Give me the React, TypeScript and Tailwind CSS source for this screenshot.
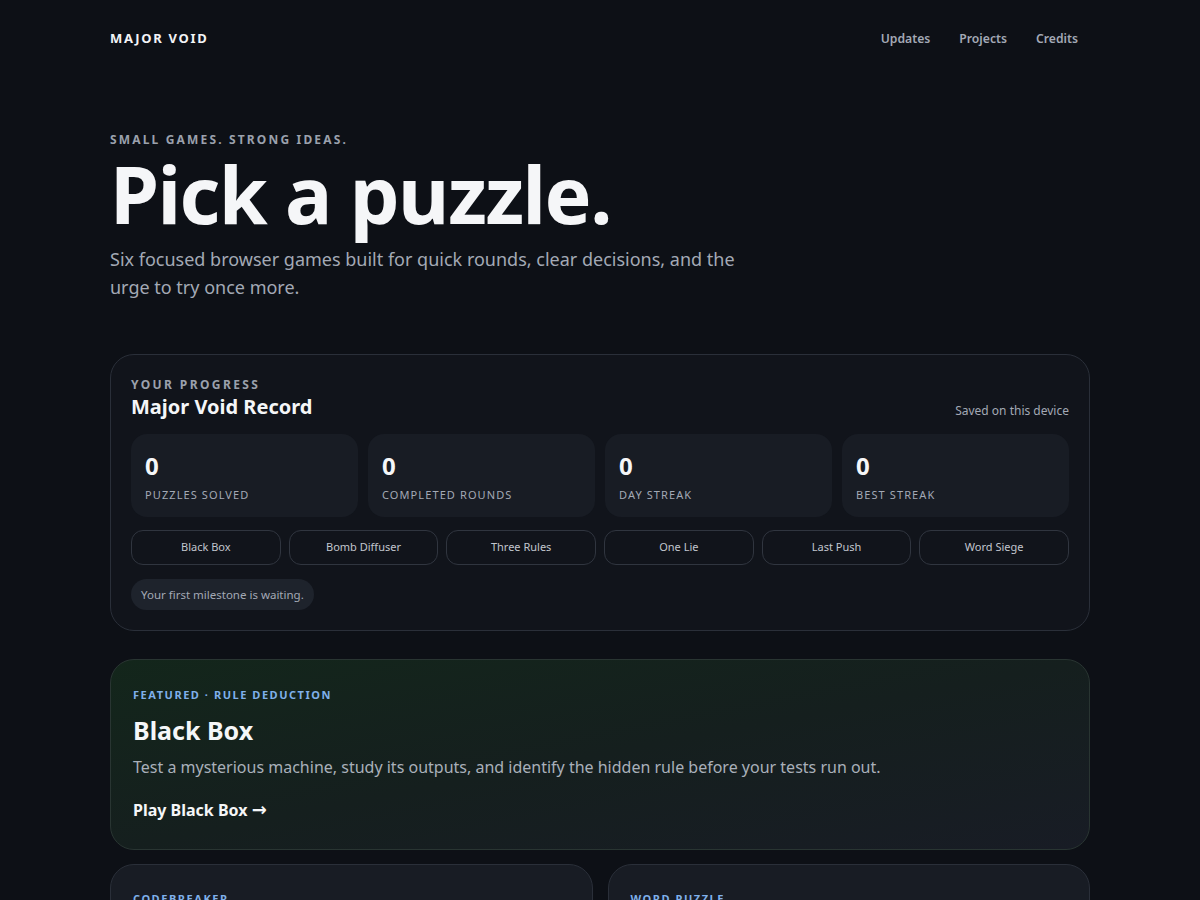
const stats = [
  { value: "0", label: "Puzzles solved" },
  { value: "0", label: "Completed rounds" },
  { value: "0", label: "Day streak" },
  { value: "0", label: "Best streak" },
];

const games = ["Black Box", "Bomb Diffuser", "Three Rules", "One Lie", "Last Push", "Word Siege"];

const cards = [
  {
    tag: "Codebreaker",
    title: "Bomb Diffuser",
    text: "Read the clues, cut the right wires, and crack the code before the timer hits zero.",
  },
  {
    tag: "Word puzzle",
    title: "Word Siege",
    text: "Hold the wall by building words from a shrinking pool of letters.",
  },
];

function Arrow() {
  return <span className="font-['DejaVu_Sans',sans-serif] text-[18px] leading-none">→</span>;
}

export default function App() {
  return (
    <div className="min-h-screen bg-[#0d1016] text-[#f3f4f6] font-['Noto_Sans','Open_Sans',sans-serif]">
      <div className="max-w-[980px] mx-auto">
        <header className="flex items-center justify-between h-[78px]">
          <a href="#" className="text-[13px] font-bold tracking-[0.13em] text-[#f3f4f6]">
            MAJOR VOID
          </a>
          <nav className="flex items-center gap-[5px] text-[12.2px] font-semibold text-[#a3a9b5]">
            <a href="#" className="px-3 py-1">Updates</a>
            <a href="#" className="px-3 py-1">Projects</a>
            <a href="#" className="px-3 py-1">Credits</a>
          </nav>
        </header>

        <section className="pt-[54px]">
          <p className="text-[12px] font-bold tracking-[0.18em] text-[#9ba1ad] leading-4">
            SMALL GAMES. STRONG IDEAS.
          </p>
          <h1 className="mt-[6px] text-[79px] font-bold leading-[1] tracking-[-0.02em] text-[#f5f6f8]">
            Pick a puzzle.
          </h1>
          <p className="mt-[12px] max-w-[640px] text-[18px] leading-7 text-[#a3a9b5]">
            Six focused browser games built for quick rounds, clear decisions, and the urge to try once more.
          </p>
        </section>

        <section className="mt-[53px] rounded-3xl border border-[#2a2f39] bg-[#11141b] px-5 pt-[22px] pb-[20px]">
          <div className="flex items-end justify-between">
            <div>
              <p className="text-[12px] font-bold tracking-[0.2em] text-[#9ba1ad] leading-4">YOUR PROGRESS</p>
              <h2 className="text-[20px] font-bold leading-7 text-[#f5f6f8]">Major Void Record</h2>
            </div>
            <p className="text-[12px] text-[#a3a9b5] pb-[1px]">Saved on this device</p>
          </div>

          <div className="mt-[13px] grid grid-cols-4 gap-[10px]">
            {stats.map((s) => (
              <div key={s.label} className="rounded-2xl bg-[#181c24] px-[14px] pt-[16px] h-[83px]">
                <div className="text-[24px] font-bold leading-8 text-[#f5f6f8]">{s.value}</div>
                <div className="mt-[5px] text-[11px] uppercase tracking-[0.1em] text-[#a3a9b5] leading-4">
                  {s.label}
                </div>
              </div>
            ))}
          </div>

          <div className="mt-[13px] grid grid-cols-6 gap-2">
            {games.map((g) => (
              <button
                key={g}
                className="h-[35px] rounded-xl border border-[#30353f] text-[11px] text-[#c2c6ce]"
              >
                {g}
              </button>
            ))}
          </div>

          <div className="mt-[14px] flex">
            <span className="rounded-full bg-[#1e232c] px-[10px] py-[7px] text-[11.5px] leading-[17px] text-[#a3a9b5]">
              Your first milestone is waiting.
            </span>
          </div>
        </section>

        <section className="mt-[28px] rounded-3xl border border-[#293532] bg-gradient-to-br from-[#13261b] via-[#151f1e] to-[#181c25] px-[22px] pt-[27px] pb-[27px]">
          <p className="text-[11px] font-bold tracking-[0.14em] text-[#7fb0ea] leading-4">
            FEATURED · RULE DEDUCTION
          </p>
          <h3 className="mt-[11px] text-[25px] font-bold leading-8 text-[#f5f6f8]">Black Box</h3>
          <p className="mt-[9px] text-[16px] leading-6 text-[#a9b0ba]">
            Test a mysterious machine, study its outputs, and identify the hidden rule before your tests run out.
          </p>
          <a href="#" className="mt-[19px] inline-block text-[16px] font-bold leading-6 text-[#f5f6f8]">
            Play Black Box <Arrow />
          </a>
        </section>

        <section className="mt-[14px] grid grid-cols-2 gap-[15px] pb-16">
          {cards.map((c) => (
            <div key={c.tag} className="rounded-3xl border border-[#2a2f39] bg-[#181c24] px-[22px] pt-[26px] pb-[27px]">
              <p className="text-[11px] font-bold uppercase tracking-[0.14em] text-[#7fb0ea] leading-4">{c.tag}</p>
              <h3 className="mt-[11px] text-[22px] font-bold leading-8 text-[#f5f6f8]">{c.title}</h3>
              <p className="mt-[9px] text-[15px] leading-6 text-[#a9b0ba]">{c.text}</p>
              <a href="#" className="mt-[19px] inline-block text-[15px] font-bold text-[#f5f6f8]">
                Play {c.title} <Arrow />
              </a>
            </div>
          ))}
        </section>
      </div>
    </div>
  );
}
